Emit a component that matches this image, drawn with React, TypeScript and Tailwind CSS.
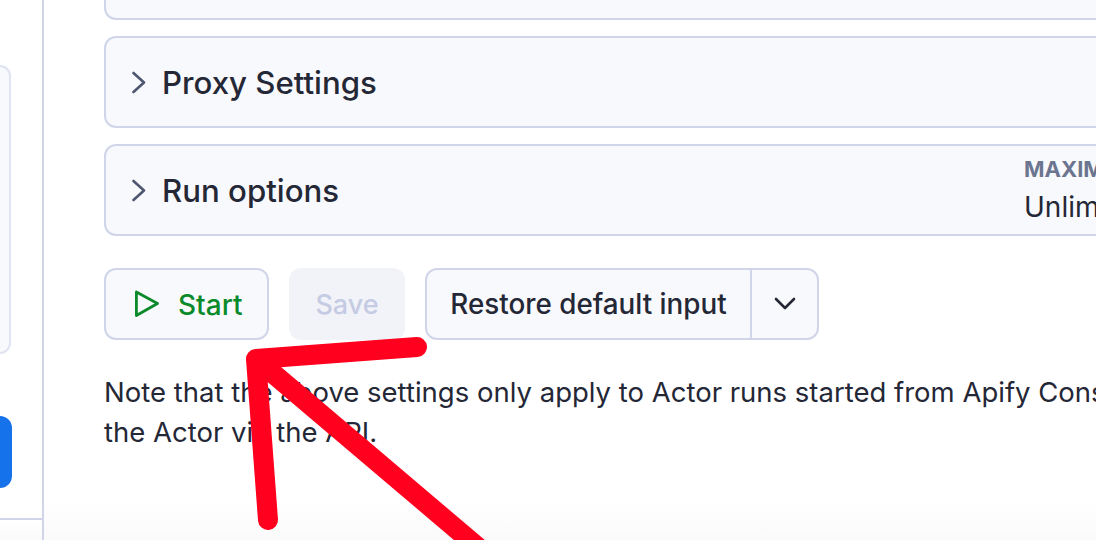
import React from "react";

const cardClass = "h-[92px] w-[1200px] shrink-0 flex items-center rounded-[12px] border-2 border-[#d0d5e9] bg-[#f8f9fc] pl-[26px] text-[#242736]";

function Chevron() {
  return (
    <svg width="16" height="24" viewBox="0 0 16 24" fill="none" className="shrink-0 mr-[14px]">
      <path d="M1.5 3 L12 12.5 L1.5 22" stroke="#4f5670" strokeWidth="2.6" strokeLinecap="round" strokeLinejoin="round" />
    </svg>
  );
}

export default function App() {
  return (
    <div className="relative flex h-[540px] w-[1096px] overflow-hidden bg-white font-['Inter',sans-serif] antialiased">
      <aside className="flex h-full w-[44px] shrink-0 flex-col border-r-2 border-[#d0d5e9]">
        <div className="mt-[65px] h-[289px] w-[11px] shrink-0 rounded-r-[12px] border-2 border-l-0 border-[#e0e3f2] bg-[#f8f9fc]" />
        <div className="mt-[62px] h-[72px] w-[12px] shrink-0 rounded-r-[12px] bg-[#1672eb]" />
        <div className="mt-[30px] flex-1 border-t-2 border-[#d0d5e9] bg-gradient-to-b from-white to-[#fafafa]" />
      </aside>
      <main className="relative flex min-w-0 flex-1 flex-col overflow-hidden pl-[60px] bg-gradient-to-b from-white from-[93%] to-[#fafafa]">
        <div className="-mt-[20px] h-[40px] w-[1200px] shrink-0 rounded-[12px] border-2 border-[#d0d5e9] bg-[#f8f9fc]" />
        <div className={`${cardClass} mt-[16px]`}>
          <Chevron />
          <span className="pt-[4px] text-[31.2px] font-medium leading-none">Proxy Settings</span>
        </div>
        <div className={`${cardClass} mt-[16px]`}>
          <Chevron />
          <span className="pt-[4px] text-[31.2px] font-medium leading-none">Run options</span>
          <div className="ml-auto flex w-[278px] shrink-0 flex-col whitespace-nowrap">
            <span className="text-[22px] font-bold leading-[26px] text-[#6c7590]">MAXIMUM COST</span>
            <span className="mt-[8px] text-[28px] leading-[34px]">Unlimited</span>
          </div>
        </div>
        <div className="mt-[32px] flex h-[72px] shrink-0 items-stretch">
          <div className="flex w-[165px] items-center rounded-[12px] border-2 border-[#d0d5e9] bg-[#f8f9fc] pl-[27px]">
            <svg width="28" height="30" viewBox="0 0 28 30" fill="none" className="shrink-0">
              <path d="M3.4 3 L24.5 14.5 L3.4 26.5 Z" stroke="#0a8a2a" strokeWidth="2.8" strokeLinejoin="round" />
            </svg>
            <span className="ml-[17px] pt-[2px] text-[28px] font-medium text-[#0a8a2a]">Start</span>
          </div>
          <div className="ml-[20px] flex w-[116px] items-center justify-center rounded-[12px] bg-[#f2f3f9] pt-[2px] text-[27px] font-medium text-[#c5cbe3]">
            Save
          </div>
          <div className="ml-[20px] flex w-[394px] items-stretch rounded-[12px] border-2 border-[#d0d5e9] bg-[#f8f9fc] text-[#242736]">
            <div className="flex w-[325px] items-center justify-center border-r-2 border-[#d0d5e9] pt-[2px] text-[27.8px] font-medium">
              Restore default input
            </div>
            <div className="flex flex-1 items-center justify-center">
              <svg width="24" height="16" viewBox="0 0 24 16" fill="none">
                <path d="M3 3 L12 12 L21 3" stroke="#242736" strokeWidth="2.6" strokeLinecap="round" strokeLinejoin="round" />
              </svg>
            </div>
          </div>
        </div>
        <p className="mt-[32px] w-[1180px] shrink-0 text-[27.5px] leading-[40px] text-[#242736]">
          Note that the above settings only apply to Actor runs started from Apify Console.<br />
          the Actor via the API.
        </p>
      </main>
      <svg width="1096" height="540" viewBox="0 0 1096 540" fill="none" className="absolute inset-0">
        <path d="M268 520 L256 359 L417 347 M256 359 L500 566" stroke="#ff001e" strokeWidth="20" strokeLinecap="round" strokeLinejoin="round" />
      </svg>
    </div>
  );
}
